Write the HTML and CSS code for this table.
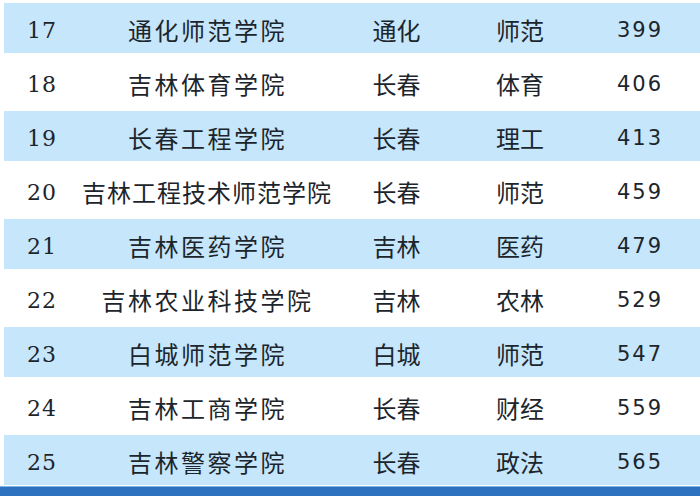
FILE: index.html
```html
<!DOCTYPE html>
<html lang="zh-CN">
<head>
<meta charset="utf-8">
<title>吉林高校</title>
<link rel="stylesheet" href="styles.css">
</head>
<body>
<div class="table">
  <div class="row alt"><div class="c rank">17</div><div class="c name">通化师范学院</div><div class="c city">通化</div><div class="c kind">师范</div><div class="c score">399</div></div>
  <div class="row"><div class="c rank">18</div><div class="c name">吉林体育学院</div><div class="c city">长春</div><div class="c kind">体育</div><div class="c score">406</div></div>
  <div class="row alt"><div class="c rank">19</div><div class="c name">长春工程学院</div><div class="c city">长春</div><div class="c kind">理工</div><div class="c score">413</div></div>
  <div class="row"><div class="c rank">20</div><div class="c name tight">吉林工程技术师范学院</div><div class="c city">长春</div><div class="c kind">师范</div><div class="c score">459</div></div>
  <div class="row alt"><div class="c rank">21</div><div class="c name">吉林医药学院</div><div class="c city">吉林</div><div class="c kind">医药</div><div class="c score">479</div></div>
  <div class="row"><div class="c rank">22</div><div class="c name">吉林农业科技学院</div><div class="c city">吉林</div><div class="c kind">农林</div><div class="c score">529</div></div>
  <div class="row alt"><div class="c rank">23</div><div class="c name">白城师范学院</div><div class="c city">白城</div><div class="c kind">师范</div><div class="c score">547</div></div>
  <div class="row"><div class="c rank">24</div><div class="c name">吉林工商学院</div><div class="c city">长春</div><div class="c kind">财经</div><div class="c score">559</div></div>
  <div class="row alt"><div class="c rank">25</div><div class="c name">吉林警察学院</div><div class="c city">长春</div><div class="c kind">政法</div><div class="c score">565</div></div>
</div>
<div class="footer"></div>
</body>
</html>
```
FILE: styles.css
```css
html, body {
  margin: 0;
  padding: 0;
  background: #ffffff;
}
body {
  width: 700px;
  height: 496px;
  overflow: hidden;
  font-family: "Noto Sans CJK SC", "Noto Sans", sans-serif;
  color: #1c252c;
}
.table {
  display: flex;
  flex-direction: column;
}
.row {
  display: grid;
  grid-template-columns: 76px 253px 127px 120px 120px;
  margin-left: 4px;
  height: 54px;
  box-sizing: border-box;
  border-top: 3px solid #ffffff;
  border-bottom: 1px solid #ffffff;
}
.row.alt {
  background: #c6e6fb;
}
.c {
  display: flex;
  align-items: center;
  justify-content: center;
  white-space: nowrap;
  padding-top: 3px;
  box-sizing: border-box;
  font-size: 24px;
  line-height: 1;
}
.rank {
  font-family: "DejaVu Serif", "Liberation Serif", serif;
  font-size: 22px;
  letter-spacing: 1px;
  padding-top: 5px;
}
.name {
  letter-spacing: 2.5px;
  padding-left: 2px;
}
.name.tight {
  letter-spacing: 1px;
  padding-left: 1px;
}
.score {
  font-family: "DejaVu Sans", "Liberation Sans", sans-serif;
  font-size: 21px;
  letter-spacing: 2px;
  padding-top: 5px;
}
.footer {
  height: 10px;
  box-sizing: border-box;
  background: #2d72bf;
  border-top: 1px solid #7fb6e6;
}
```
